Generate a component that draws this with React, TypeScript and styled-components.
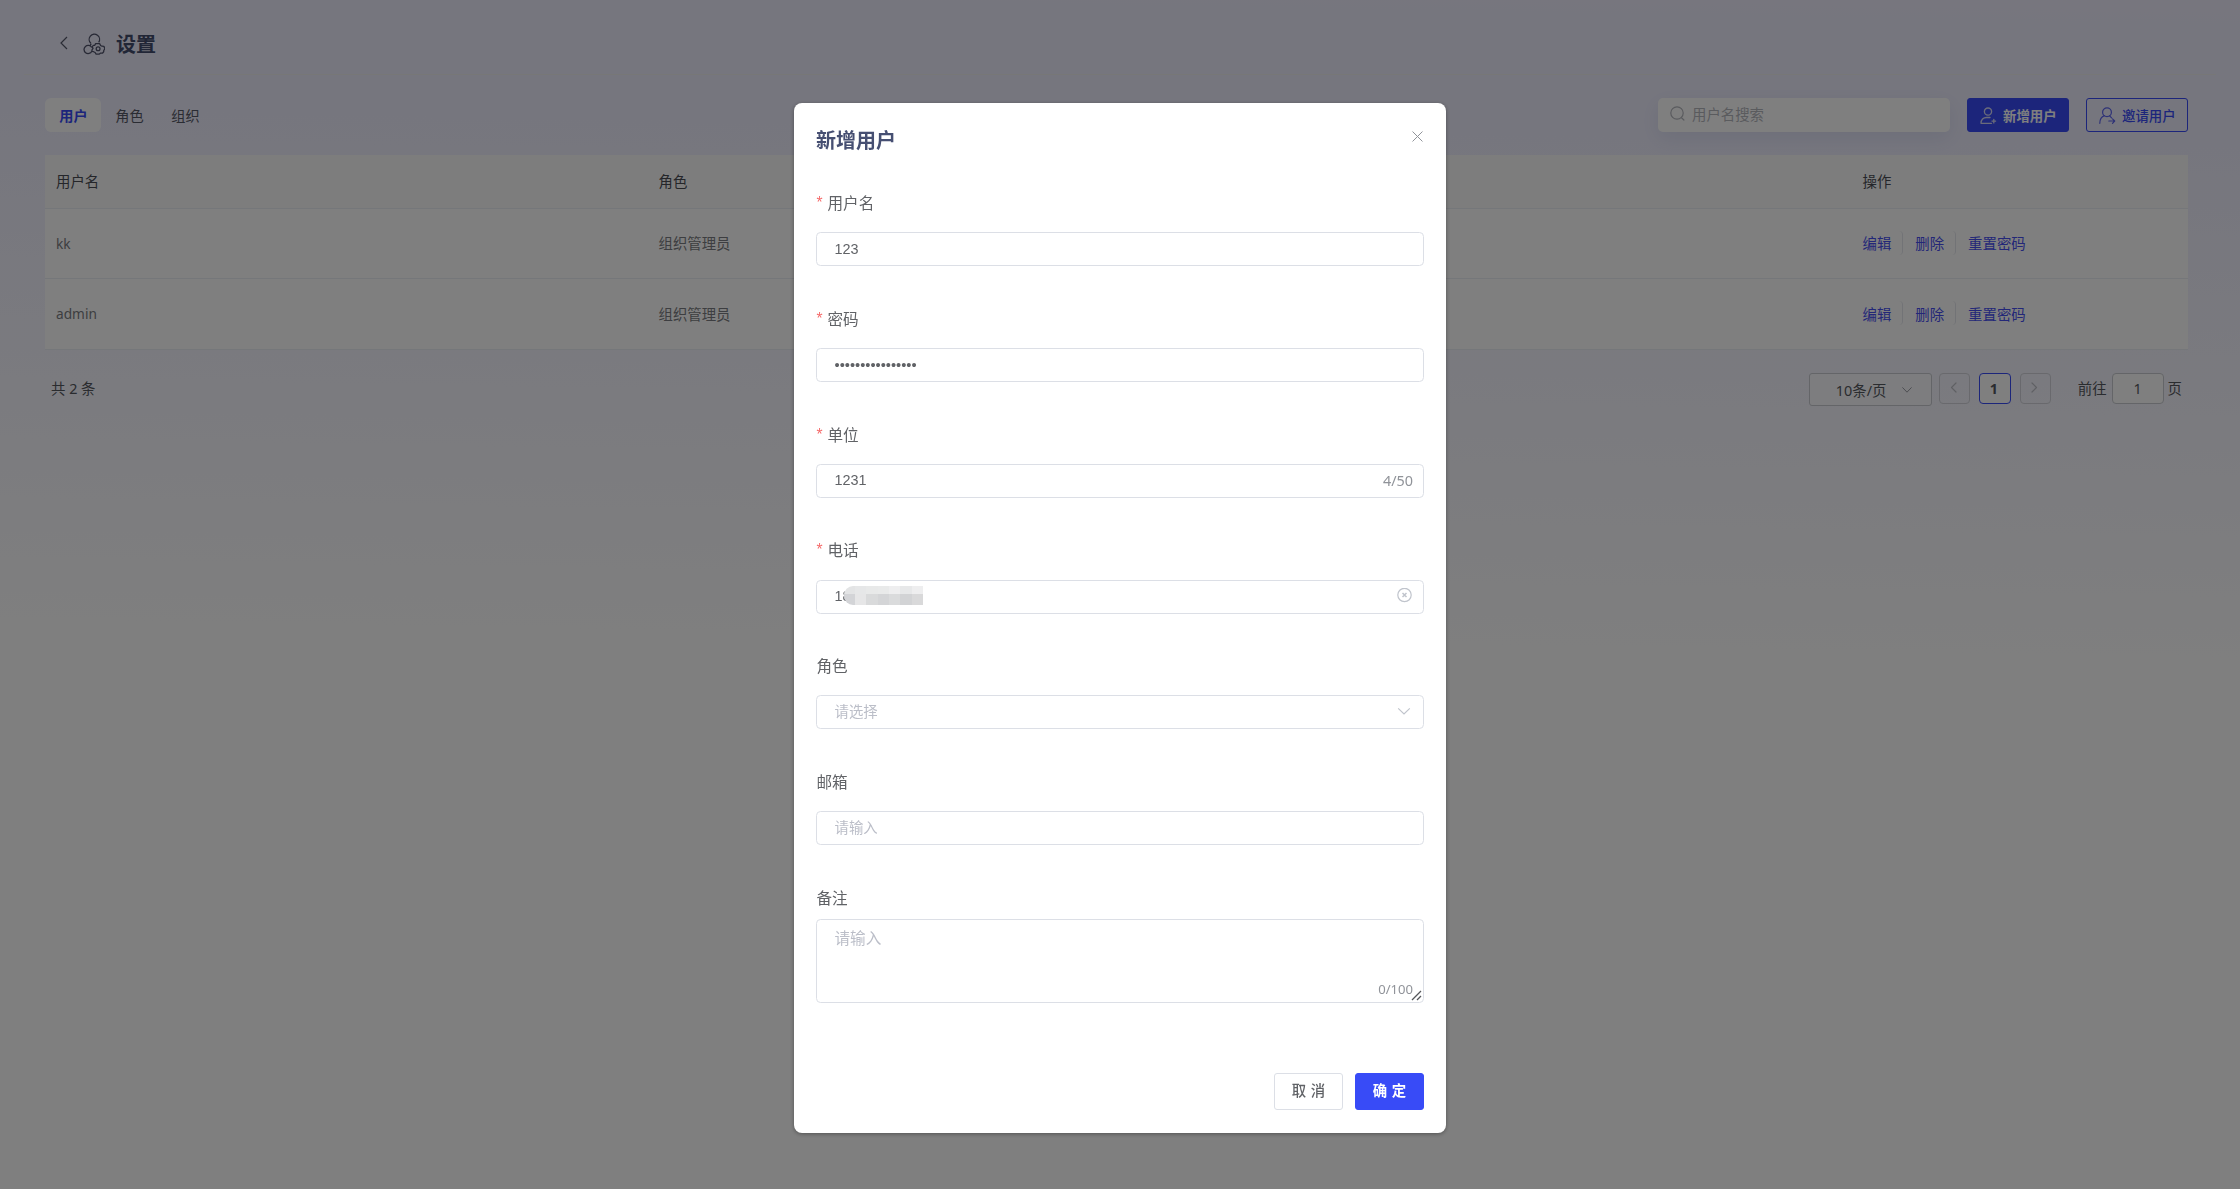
import React from "react";
import styled, { createGlobalStyle, css } from "styled-components";

const uiFont = `"Noto Sans", "Noto Sans CJK SC", sans-serif`;
const inputFont = `"Liberation Sans", "Noto Sans CJK SC", sans-serif`;
const primary = "#384bf7";

const GlobalStyle = createGlobalStyle`
  * { box-sizing: border-box; }
  body { margin: 0; overflow: hidden; font-family: ${uiFont}; font-size: 14.4px; color: #606266; }
  button, input, textarea { font: inherit; color: inherit; }
`;

const Page = styled.div`
  height: 1189px;
  padding: 0 52px 0 45px;
  background: linear-gradient(1deg, #fff 44%, #ededfd 88%, #ededfd 98%, #efedfc 100%);
`;

const Header = styled.header`
  display: flex;
  align-items: center;
  height: 75px;
  margin: 0 -28px 0 -21px;
  padding: 14px 0 0 35px;
  border-bottom: 1px solid #eeeeee;
`;

const BackIcon = styled.svg`
  width: 9px;
  height: 14px;
  margin: -3px 15px 0 0;
`;

const SettingsIcon = styled.svg`
  width: 22px;
  height: 22px;
  margin-right: 11px;
`;

const PageTitle = styled.h1`
  margin: 0;
  padding-top: 2px;
  font-size: 20px;
  line-height: 28px;
  font-weight: 700;
  color: #434c6c;
`;

const Toolbar = styled.div`
  display: flex;
  height: 34px;
  margin-top: 23px;
`;

const Tab = styled.button<{ $active?: boolean }>`
  width: 56px;
  height: 34px;
  padding: 0 0 1px 1px;
  border: 0;
  border-radius: 6px;
  font-size: 14.2px;
  background: ${(p) => (p.$active ? "#fff" : "transparent")};
  color: ${(p) => (p.$active ? primary : "#555866")};
  font-weight: ${(p) => (p.$active ? 700 : 400)};
`;

const Search = styled.label`
  display: flex;
  align-items: center;
  width: 292px;
  height: 34px;
  margin-left: auto;
  padding: 0 0 3px 12px;
  gap: 7px;
  border-radius: 5px;
  background: #fff;
  color: #b4b6bd;
  box-shadow: 0 6px 20px rgba(56, 75, 150, 0.1);
  svg { width: 15px; height: 15px; }
`;

const ToolButton = styled.button<{ $primary?: boolean }>`
  display: flex;
  align-items: center;
  width: 102px;
  height: 34px;
  margin-left: 17px;
  padding: 0 0 1px 12px;
  gap: 6px;
  border: 1px solid ${primary};
  border-radius: 3px;
  font-size: 13.4px;
  font-weight: ${(p) => (p.$primary ? 700 : 500)};
  background: ${(p) => (p.$primary ? primary : "transparent")};
  color: ${(p) => (p.$primary ? "#fff" : primary)};
  white-space: nowrap;
  svg { width: 17px; height: 18px; flex: none; margin-top: 2px; }
`;

const Table = styled.section`
  margin-top: 23px;
`;

const Row = styled.div<{ $head?: boolean; $height: number }>`
  display: grid;
  grid-template-columns: 601.5px 1204px 1fr;
  align-items: center;
  height: ${(p) => p.$height}px;
  padding-bottom: 2px;
  border-bottom: 1px solid #ebeef5;
  background: ${(p) => (p.$head ? "#fbfbfb" : "#fff")};
  color: ${(p) => (p.$head ? "#4a4d55" : "#7b7d82")};
`;

const Cell = styled.div`
  padding-left: 12px;
  &:first-child { padding-left: 11px; }
`;

const NameCell = styled.div`
  padding: 1px 0 0 11px;
  font-size: 13.7px;
`;

const Actions = styled(Cell)`
  display: flex;
`;

const Action = styled.button`
  height: 24px;
  padding: 0 11px 0 0;
  margin-right: 12px;
  border: 0;
  border-right: 1px solid #e4e6ec;
  border-radius: 4px;
  background: transparent;
  color: #474ff0;
  &:last-child { border: 0; }
`;

const Pagination = styled.footer`
  display: flex;
  align-items: flex-start;
  margin-top: 23px;
  padding: 0 6px;
  color: #55585e;
  line-height: 31px;
`;

const SizeSelect = styled.div`
  display: flex;
  align-items: center;
  width: 123px;
  height: 33px;
  margin: 0 7px 0 auto;
  padding: 1px 19px 0 26px;
  justify-content: space-between;
  border: 1px solid #c8cad0;
  border-radius: 3px;
  background: rgba(255, 255, 255, 0.5);
  svg { width: 10px; height: 6px; }
`;

const PageButton = styled.button<{ $active?: boolean; $gap?: number }>`
  display: flex;
  align-items: center;
  justify-content: center;
  width: ${(p) => (p.$active ? 32 : 31)}px;
  height: 31px;
  margin-right: ${(p) => p.$gap ?? 9}px;
  padding: 0 2px 0 0;
  border: 1px solid ${(p) => (p.$active ? primary : "#d2d3da")};
  border-radius: 4px;
  background: ${(p) => (p.$active ? "#fff" : "transparent")};
  font-weight: 700;
  svg { width: 7px; height: 11px; margin-top: -2px; }
`;

const PageInput = styled.div`
  width: 52px;
  height: 31px;
  margin: 0 4px 0 5px;
  line-height: 29px;
  text-align: center;
  border: 1px solid #c8cad0;
  border-radius: 4px;
  background: #fff;
`;

const Overlay = styled.div`
  position: fixed;
  inset: 0;
  background: rgba(0, 0, 0, 0.5);
`;

const Dialog = styled.div`
  width: 652px;
  height: 1030px;
  margin: 103px auto 0;
  padding: 0 22px;
  border-radius: 8px;
  background: #fff;
  box-shadow: 0 1px 4px rgba(0, 0, 0, 0.35);
`;

const DialogHead = styled.div`
  display: flex;
  align-items: center;
  justify-content: space-between;
  height: 75px;
  padding-bottom: 2px;
  font-size: 20px;
  font-weight: 700;
  color: #464f72;
  svg { width: 11px; height: 11px; margin: -6px 1px 0 0; }
`;

const Field = styled.div`
  height: 115.75px;
`;

const Label = styled.label<{ $tight?: boolean }>`
  display: flex;
  align-items: center;
  height: 49px;
  margin-bottom: ${(p) => (p.$tight ? -2.2 : 5.4)}px;
  padding-left: 0.5px;
  font-size: 15.6px;
  color: #606266;
`;

const Star = styled.span`
  width: 11px;
  margin-top: 1px;
  font-family: "Liberation Sans", sans-serif;
  color: #f56c6c;
`;

const controlBox = css`
  border: 1px solid #dcdfe6;
  border-radius: 4.5px;
  background: #fff;
`;

const Control = styled.div<{ $empty?: boolean }>`
  ${controlBox}
  display: flex;
  align-items: center;
  height: 34px;
  padding: 0 10px ${(p) => (p.$empty ? 3 : 1)}px 17.5px;
  font-family: ${inputFont};
  color: ${(p) => (p.$empty ? "#bbbec8" : "#606266")};
  svg { margin-left: auto; }
`;

const Counter = styled.span`
  margin-left: auto;
  font-family: ${uiFont};
  color: #909399;
`;

const Password = styled.span`
  font-size: 14.66px;
`;

const Phone = styled.span`
  display: flex;
  align-items: center;
  width: 100px;
`;

const Mosaic = styled.span`
  display: grid;
  grid-template-columns: repeat(7, 11.4px);
  grid-template-rows: 8px 11px;
  height: 19px;
  margin: -1px 0 0 -7px;
  border-radius: 9px 0 0 9px;
  overflow: hidden;
`;

const Tile = styled.i<{ $tone: string }>`
  background: ${(p) => p.$tone};
`;

const Area = styled.div`
  ${controlBox}
  display: flex;
  flex-direction: column;
  justify-content: space-between;
  height: 84px;
  padding: 8px 2px 1px 17.5px;
  font-family: ${inputFont};
  font-size: 15.6px;
  line-height: 22px;
  color: #bbbec8;
`;

const AreaFoot = styled.div`
  display: flex;
  align-items: flex-end;
  height: 24px;
  font-size: 13.1px;
  line-height: 24px;
  svg { width: 11px; height: 11px; margin: 0 -1px 0 -2px; }
`;

const DialogFoot = styled.div`
  display: flex;
  justify-content: flex-end;
  gap: 12px;
  margin-top: 69.5px;
`;

const DialogButton = styled.button<{ $primary?: boolean }>`
  width: 69px;
  height: 37px;
  padding: 0 0 3px;
  border: 1px solid ${(p) => (p.$primary ? primary : "#dcdfe6")};
  border-radius: 3px;
  background: ${(p) => (p.$primary ? primary : "#fff")};
  color: ${(p) => (p.$primary ? "#fff" : "#606266")};
  font-weight: ${(p) => (p.$primary ? 700 : 500)};
  word-spacing: 1px;
`;

const Chevron = ({ d, box, color, width = 1.2 }: { d: string; box: string; color: string; width?: number }) => (
  <svg viewBox={box} fill="none" stroke={color} strokeWidth={width} strokeLinecap="round" strokeLinejoin="round">
    <path d={d} />
  </svg>
);

const AddUserIcon = () => (
  <svg viewBox="0 0 17 18" fill="none" stroke="#d5d7f5" strokeWidth="1.3" strokeLinecap="round" strokeLinejoin="round">
    <circle cx="8" cy="4.6" r="3.6" />
    <path d="M10 10.5H6.6C3.200 10.500 1 12.700 1 16.300h10.500M13.800 12.300v3.600M12 14.100h3.600" />
  </svg>
);

const InviteUserIcon = () => (
  <svg viewBox="0 0 17 18" fill="none" stroke="#5b63ee" strokeWidth="1.2" strokeLinecap="round" strokeLinejoin="round">
    <circle cx="8" cy="5.2" r="4.4" />
    <path d="M.8 16.300c0-4 1.600-6.600 4.600-7.700M10.600 8.900l2 2M9.800 14h5.800M13.500 11.900l2.200 2.100-2.200 2.300" />
  </svg>
);

const users = [
  { name: "kk", role: "组织管理员", height: 70 },
  { name: "admin", role: "组织管理员", height: 71 },
];

const tones = [
  "#e3e4e5", "#e6e7e8", "#e8e9e9", "#e9eaea", "#eeeeef", "#e7e8e9", "#eeeeef",
  "#d3d4d7", "#e6e6e7", "#d9dadb", "#d4d5d7", "#dadbdc", "#d2d3d5", "#d9d9da",
];

const FormField = ({ label, required, children }: { label: string; required?: boolean; children: React.ReactNode }) => (
  <Field>
    <Label>
      {required && <Star>*</Star>}
      {label}
    </Label>
    {children}
  </Field>
);

export default function App() {
  return (
    <>
      <GlobalStyle />
      <Page>
        <Header>
          <BackIcon viewBox="0 0 9 14" fill="none" stroke="#55586a" strokeWidth="1.2">
            <path d="M8 1 2 7l6 6" />
          </BackIcon>
          <SettingsIcon viewBox="0 0 22 22" fill="none" stroke="#50536b" strokeWidth="1.3" strokeLinejoin="round">
            <path d="M7.900 10.300a5.200 5.200 0 1 1 7.800-1" />
            <path d="M8.200 10.600 7.200 12.500M8.700 14.500A4.100 4.100 0 1 0 8.800 18.300" />
            <path d="M12.600 10.600h4l1 1.900 1.300.7 2 .1 1 2.600-1.100 1.400-.1 1.500-1.300 1.400-1.700-.1-1.300 1h-3.300l-1-1.600-1.500-.8-1.700-.3.1-1.600 1-1.400-.8-1.700 1.200-1.300 1.400-.1z" />
            <circle cx="15.100" cy="15.700" r="1.900" />
          </SettingsIcon>
          <PageTitle>设置</PageTitle>
        </Header>
        <Toolbar>
          <Tab $active>用户</Tab>
          <Tab>角色</Tab>
          <Tab>组织</Tab>
          <Search>
            <svg viewBox="0 0 15 15" fill="none" stroke="#b4b6bd" strokeWidth="1.2" strokeLinecap="round">
              <circle cx="7" cy="7" r="6.2" />
              <path d="m11.5 11.8 2.4 2.2" />
            </svg>
            用户名搜索
          </Search>
          <ToolButton $primary>
            <AddUserIcon />
            新增用户
          </ToolButton>
          <ToolButton>
            <InviteUserIcon />
            邀请用户
          </ToolButton>
        </Toolbar>
        <Table>
          <Row $head $height={54}>
            <Cell>用户名</Cell>
            <Cell>角色</Cell>
            <Cell>操作</Cell>
          </Row>
          {users.map((u) => (
            <Row key={u.name} $height={u.height}>
              <NameCell>{u.name}</NameCell>
              <Cell>{u.role}</Cell>
              <Actions>
                <Action>编辑</Action>
                <Action>删除</Action>
                <Action>重置密码</Action>
              </Actions>
            </Row>
          ))}
        </Table>
        <Pagination>
          <span>共 2 条</span>
          <SizeSelect>
            10条/页
            <Chevron d="M.7.7 5 5.2 9.3.7" box="0 0 10 6" color="#9a9ca3" width={1} />
          </SizeSelect>
          <PageButton>
            <Chevron d="M6 1 1.5 5.5 6 10" box="0 0 7 11" color="#bfc0c8" />
          </PageButton>
          <PageButton $active>1</PageButton>
          <PageButton $gap={27}>
            <Chevron d="M1 1l4.5 4.5L1 10" box="0 0 7 11" color="#bfc0c8" />
          </PageButton>
          <span>前往</span>
          <PageInput>1</PageInput>
          <span>页</span>
        </Pagination>
      </Page>
      <Overlay>
        <Dialog>
          <DialogHead>
            新增用户
            <Chevron d="M.8.8 10.200 10.200M10.200.8.8 10.200" box="0 0 11 11" color="#909399" width={1} />
          </DialogHead>
          <FormField label="用户名" required>
            <Control>123</Control>
          </FormField>
          <FormField label="密码" required>
            <Control>
              <Password>{"•".repeat(16)}</Password>
            </Control>
          </FormField>
          <FormField label="单位" required>
            <Control>
              1231
              <Counter>4/50</Counter>
            </Control>
          </FormField>
          <FormField label="电话" required>
            <Control>
              <Phone>
                18
                <Mosaic>
                  {tones.map((t, i) => (
                    <Tile key={i} $tone={t} />
                  ))}
                </Mosaic>
              </Phone>
              <svg width="16" height="16" viewBox="0 0 16 16" fill="none" stroke="#c0c4cc" strokeWidth="1.2">
                <circle cx="7.5" cy="7" r="6.7" />
                <path d="m5.500 5 4 4M9.500 5l-4 4" strokeWidth="1.5" />
              </svg>
            </Control>
          </FormField>
          <FormField label="角色">
            <Control $empty>
              请选择
              <svg width="16" height="8" viewBox="0 0 16 8" fill="none" stroke="#c0c4cc" strokeWidth="1.2">
                <path d="m1.200 1.400 5.800 5.600 5.800-5.600" />
              </svg>
            </Control>
          </FormField>
          <FormField label="邮箱">
            <Control $empty>请输入</Control>
          </FormField>
          <Label $tight>备注</Label>
          <Area>
            <span>请输入</span>
            <AreaFoot>
              <Counter>0/100</Counter>
              <svg viewBox="0 0 11 11" stroke="#55575b" strokeWidth="1.3">
                <path d="M1 10 10 1M6 10l4-4" />
              </svg>
            </AreaFoot>
          </Area>
          <DialogFoot>
            <DialogButton>取 消</DialogButton>
            <DialogButton $primary>确 定</DialogButton>
          </DialogFoot>
        </Dialog>
      </Overlay>
    </>
  );
}
